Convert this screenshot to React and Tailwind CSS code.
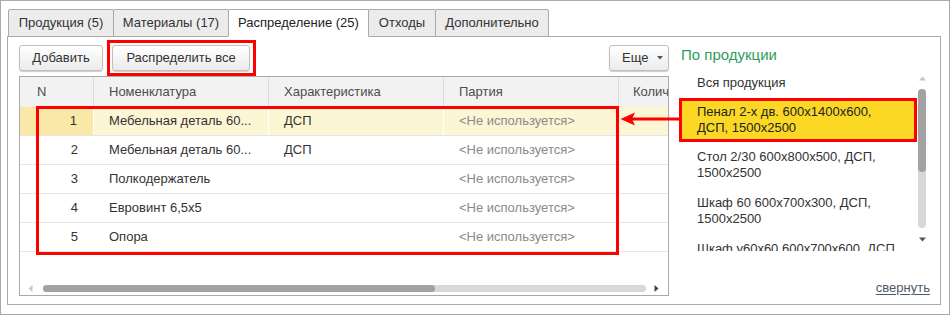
import React from "react";

function Btn({ children, className = "" }) {
  return (
    <div
      className={`h-[26px] flex items-center justify-center rounded-[3px] border border-[#bfbfbf] bg-linear-to-b from-white to-[#ebebeb] shadow-[0_1px_1px_rgba(0,0,0,0.2)] text-[#333] ${className}`}
    >
      {children}
    </div>
  );
}

const tabs = [
  { label: "Продукция (5)", w: "w-[106px]", active: false },
  { label: "Материалы (17)", w: "w-[116px]", active: false },
  { label: "Распределение (25)", w: "w-[141px]", active: true },
  { label: "Отходы", w: "w-[68px]", active: false },
  { label: "Дополнительно", w: "w-[114px]", active: false },
];

const rows = [
  { n: 1, nom: "Мебельная деталь 60...", ch: "ДСП" },
  { n: 2, nom: "Мебельная деталь 60...", ch: "ДСП" },
  { n: 3, nom: "Полкодержатель", ch: "" },
  { n: 4, nom: "Евровинт 6,5x5", ch: "" },
  { n: 5, nom: "Опора", ch: "" },
];

const items = [
  ["Стол 2/30 600x800x500, ДСП,", "1500x2500"],
  ["Шкаф 60 600x700x300, ДСП,", "1500x2500"],
  ["Шкаф у60x60 600x700x600, ДСП", null],
];

export default function App() {
  return (
    <div className="relative w-[950px] h-[315px] border border-[#a9a9a9] bg-white pt-[8px] pl-[6px] pr-[8px] overflow-hidden font-['Liberation_Sans',Arial,sans-serif] text-[13px] text-[#333]">
      {/* Tabs */}
      <div className="relative z-10 flex pl-[1px] h-[28px]">
        {tabs.map((t, i) => (
          <div
            key={t.label}
            className={`${t.w} ${i > 0 ? "-ml-px" : ""} h-[28px] flex items-center justify-center rounded-t-[2px] border border-[#a9a9a9] ${
              t.active ? "bg-white border-b-white relative z-10 text-[#222]" : "bg-[#ececec] text-[#333]"
            }`}
          >
            {t.label}
          </div>
        ))}
      </div>

      {/* Panel */}
      <div className="-mt-px h-[269px] border border-[#a9a9a9] flex pt-[8px] pb-[8px] pl-[11px] pr-[10px] gap-[10px]">
        {/* Left column */}
        <div className="w-[650px] flex flex-col">
          <div className="flex h-[26px]">
            <Btn className="w-[84px]">Добавить</Btn>
            <div className="relative ml-[9px]">
              <Btn className="w-[138px]">Распределить все</Btn>
              <div className="absolute -left-[5px] -top-[5px] -right-[6px] -bottom-[5px] border-[3px] border-[#ff0000]" />
            </div>
            <Btn className="ml-auto w-[60px] justify-start pl-[12px] gap-[9px]">
              <span>Еще</span>
              <svg width="6" height="4" viewBox="0 0 6 4">
                <polygon points="0,0 6,0 3,3.5" fill="#555" />
              </svg>
            </Btn>
          </div>

          {/* Table */}
          <div className="relative mt-[5px] flex-1 border border-[#a9a9a9] flex flex-col overflow-hidden">
            <div className="flex h-[30px] bg-[#f2f2f2] text-[#4d4d4d] shrink-0">
              <div className="w-[74px] border-r border-[#dcdcdc] pl-[17px] flex items-center">N</div>
              <div className="w-[175px] border-r border-[#dcdcdc] pl-[15px] flex items-center">Номенклатура</div>
              <div className="w-[175px] border-r border-[#dcdcdc] pl-[15px] flex items-center">Характеристика</div>
              <div className="w-[175px] border-r border-[#dcdcdc] pl-[15px] flex items-center">Партия</div>
              <div className="flex-1 pl-[14px] flex items-center whitespace-nowrap overflow-hidden">Количество</div>
            </div>
            {rows.map((r, i) => {
              const sel = i === 0;
              return (
                <div
                  key={r.n}
                  className={`flex h-[29px] border-b border-[#e6e6e6] shrink-0 ${sel ? "bg-[#fcf6d5]" : "bg-white"}`}
                >
                  <div
                    className={`w-[74px] pr-[16px] flex items-center justify-end ${
                      sel ? "bg-[#fae8a9] border-r border-white" : ""
                    }`}
                  >
                    {r.n}
                  </div>
                  <div className={`w-[175px] pl-[15px] flex items-center whitespace-nowrap ${sel ? "border-r border-white" : ""}`}>
                    {r.nom}
                  </div>
                  <div className={`w-[175px] pl-[15px] flex items-center ${sel ? "border-r border-white" : ""}`}>{r.ch}</div>
                  <div className={`w-[175px] pl-[15px] flex items-center text-[#8a8a8a] whitespace-nowrap ${sel ? "border-r border-white" : ""}`}>
                    &lt;Не используется&gt;
                  </div>
                  <div className="flex-1" />
                </div>
              );
            })}
            {/* horizontal scrollbar */}
            <div className="mt-auto h-[12px] mb-[1px] flex items-center pl-[8px] shrink-0">
              <svg width="5" height="7" viewBox="0 0 5 7">
                <polygon points="4.5,0 4.5,7 0.5,3.5" fill="#c8c8c8" />
              </svg>
              <div className="ml-[10px] w-[603px] h-[7px] rounded-full bg-[#d8d8d8] flex">
                <div className="w-[392px] h-[7px] rounded-full bg-[#a2a2a2]" />
              </div>
              <svg className="ml-[8px]" width="5" height="7" viewBox="0 0 5 7">
                <polygon points="0.5,0 0.5,7 4.5,3.5" fill="#444" />
              </svg>
            </div>
            {/* red annotation around rows */}
            <div className="absolute left-[16px] top-[29px] w-[583px] h-[149px] border-[3px] border-[#ff0000]" />
          </div>
        </div>

        {/* Right column */}
        <div className="flex-1 flex flex-col">
          <div className="h-[20px] leading-[20px] text-[15px] text-[#2e9e5c] pl-[2px]">По продукции</div>
          <div className="mt-[3px] h-[183px] flex">
            <div className="w-[238px] overflow-hidden leading-[16px]">
              <div className="pl-[18px] py-[7px]">Вся продукция</div>
              <div className="pl-[15px] py-[3px] border-[3px] border-[#ff0000] bg-[#fad824] text-[#222]">
                <div>Пенал 2-х дв. 600x1400x600,</div>
                <div>ДСП, 1500x2500</div>
              </div>
              {items.map((it) => (
                <div key={it[0]} className="pl-[18px] py-[7px] whitespace-nowrap">
                  <div>{it[0]}</div>
                  {it[1] && <div>{it[1]}</div>}
                </div>
              ))}
            </div>
            <div className="ml-[1px] w-[8px] flex flex-col items-center pt-[8px]">
              <svg width="7" height="5" viewBox="0 0 7 5">
                <polygon points="0,4.5 7,4.5 3.5,0.5" fill="#c4c4c4" />
              </svg>
              <div className="mt-[8px] w-[8px] h-[139px] rounded-full bg-[#d8d8d8] flex flex-col">
                <div className="w-[8px] h-[83px] rounded-full bg-[#a2a2a2]" />
              </div>
              <svg className="mt-[9px]" width="7" height="5" viewBox="0 0 7 5">
                <polygon points="0,0.5 7,0.5 3.5,4.5" fill="#555" />
              </svg>
            </div>
          </div>
          <div className="mt-auto text-right leading-[16px]">
            <span className="underline text-[#4f5a68] underline-offset-2">свернуть</span>
          </div>
        </div>
      </div>

      {/* arrow annotation */}
      <svg className="absolute left-[619px] top-[109px]" width="62" height="18" viewBox="0 0 62 18">
        <line x1="12" y1="9" x2="62" y2="9" stroke="#ff0000" strokeWidth="3" />
        <polygon points="0.5,9 15,2.5 12,9 15,15.5" fill="#ff0000" />
      </svg>
    </div>
  );
}
